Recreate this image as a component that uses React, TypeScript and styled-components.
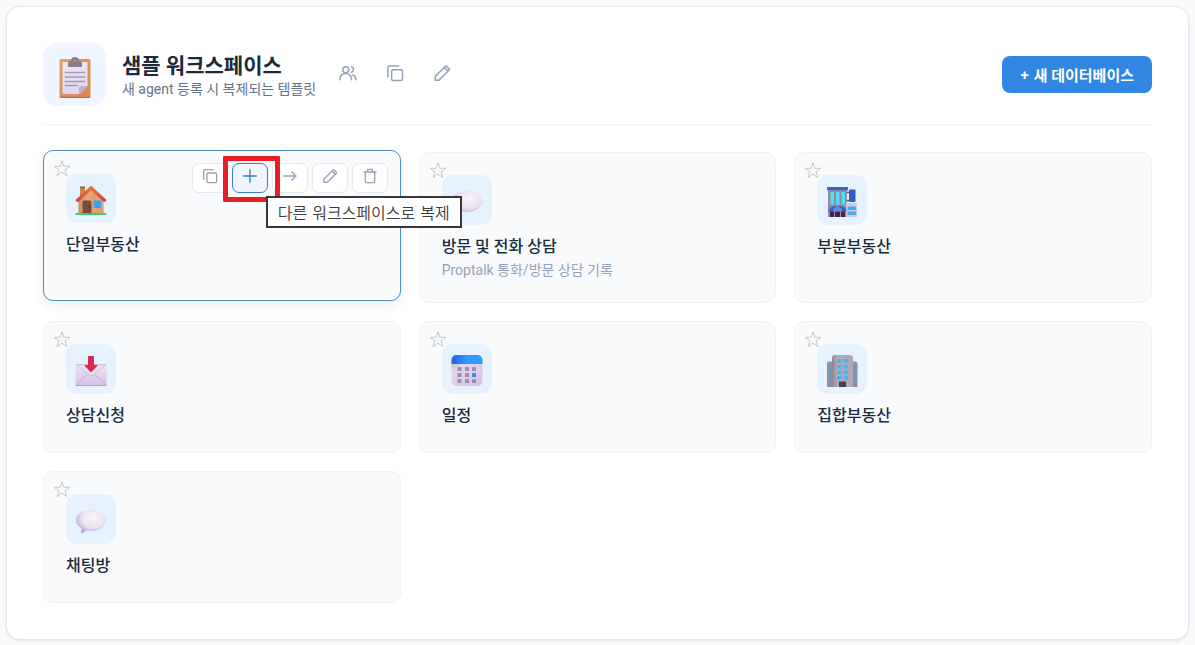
import React from 'react';
import styled, { createGlobalStyle, css } from 'styled-components';

const GlobalStyle = createGlobalStyle`
  *, *::before, *::after { box-sizing: border-box; }
  body {
    margin: 0;
    background: #f8fafc;
    color: #1a2b3d;
    font-family: Roboto, "Noto Sans CJK KR", sans-serif;
  }
  button { font-family: inherit; cursor: pointer; }
  h1, h2, p, ul { margin: 0; padding: 0; }
`;

const Page = styled.main`
  padding: 6px;
`;

const Panel = styled.section`
  padding: 36px;
  background: #fff;
  border: 1px solid #e2e8f0;
  border-radius: 14px;
  box-shadow: 0 1px 3px rgba(15, 23, 42, 0.1);
`;

const Header = styled.header`
  display: flex;
  align-items: center;
  padding-bottom: 18px;
  margin-bottom: 27px;
  border-bottom: 1px solid #f0f2f5;
`;

const WorkspaceIcon = styled.div`
  display: grid;
  place-items: center;
  flex: none;
  width: 63px;
  height: 63px;
  padding-top: 6px;
  margin-right: 16px;
  border-radius: 14px;
  background: #eff6ff;
`;

const TitleBlock = styled.div`
  padding-top: 2px;
`;

const WorkspaceTitle = styled.h1`
  font-size: 21px;
  line-height: 26px;
  font-weight: 700;
`;

const WorkspaceNote = styled.p`
  font-size: 14px;
  line-height: 20px;
  color: #64748b;
`;

const HeaderTools = styled.div`
  display: flex;
  gap: 9px;
  margin-left: 13px;
  padding-bottom: 4px;
`;

const GhostButton = styled.button`
  display: grid;
  place-items: center;
  width: 38px;
  height: 38px;
  padding: 0;
  border: 0;
  border-radius: 8px;
  background: transparent;
  color: #94a3b8;
`;

const PrimaryButton = styled.button`
  display: flex;
  align-items: center;
  gap: 5px;
  margin-left: auto;
  height: 37px;
  padding: 0 18px;
  border: 0;
  border-radius: 8px;
  background: #3086e0;
  color: #fff;
  font-size: 15px;
  font-weight: 700;
  white-space: nowrap;
`;

const Grid = styled.ul`
  display: grid;
  grid-template-columns: repeat(3, minmax(0, 1fr));
  gap: 18px;
  list-style: none;
`;

const Card = styled.li<{ $active?: boolean }>`
  position: relative;
  padding: 22px;
  border: 1px solid #f0f2f6;
  border-radius: 10px;
  background: #f8fafc;
  ${({ $active }) =>
    $active &&
    css`
      z-index: 1;
      border-color: #4a8fcb;
      box-shadow: 0 4px 12px rgba(0, 0, 0, 0.08);
      transform: translateY(-2px);
    `}
`;

const StarButton = styled.button`
  position: absolute;
  top: 8px;
  left: 9px;
  display: grid;
  padding: 0;
  border: 0;
  background: transparent;
  color: #c6c8ca;
`;

const Tile = styled.div`
  display: grid;
  place-items: center;
  width: 50px;
  height: 50px;
  padding-top: 4px;
  border-radius: 10px;
  background: #e6f3fe;
`;

const CardTitle = styled.h2`
  margin: 11px 0 3px;
  font-size: 16px;
  line-height: 22px;
  font-weight: 500;
`;

const CardNote = styled.p`
  font-size: 14px;
  line-height: 19px;
  color: #94a3b8;
`;

const CardTools = styled.div`
  position: absolute;
  top: 12px;
  right: 12px;
  display: flex;
  gap: 4px;
`;

const ToolButton = styled.button<{ $active?: boolean }>`
  position: relative;
  display: flex;
  justify-content: center;
  width: 36px;
  height: 30px;
  padding: 4px 0 0;
  border: 1px solid ${({ $active }) => ($active ? '#3b82c4' : '#e2e8f0')};
  border-radius: 7px;
  background: ${({ $active }) => ($active ? '#eff5fb' : '#fff')};
  color: ${({ $active }) => ($active ? '#3182ce' : '#94a3b8')};
  z-index: ${({ $active }) => ($active ? 1 : 0)};
`;

const Highlight = styled.span`
  position: absolute;
  top: -8px;
  left: -10px;
  width: 57px;
  height: 46px;
  border: 5px solid #e91d25;
  border-radius: 1px;
  pointer-events: none;
`;

const Tooltip = styled.span`
  position: absolute;
  top: 32px;
  left: 33px;
  padding: 3px 10px 0;
  border: 2px solid #3a383c;
  background: #fff;
  color: #3c3c3c;
  font-family: "DejaVu Sans", "Noto Sans CJK KR", sans-serif;
  font-size: 16px;
  line-height: 25px;
  font-weight: 350;
  white-space: nowrap;
`;

type IconName = 'users' | 'copy' | 'pencil' | 'plus' | 'arrow' | 'trash';

const iconShapes: Record<IconName, React.ReactNode> = {
  users: (
    <>
      <circle cx="9" cy="7.5" r="4" />
      <path d="M1.5 21v-1.5a7.5 7 0 0 1 15 0V21M16.5 3.6a4 4 0 0 1 0 7.6M18.5 14.6a6.6 6.6 0 0 1 4 6.4" />
    </>
  ),
  copy: (
    <>
      <rect x="7.5" y="7.5" width="14.5" height="14.5" rx="2" />
      <path d="M2.500 17V4.500a2 2 0 0 1 2-2H17" />
    </>
  ),
  pencil: <path d="M3 21.500v-5L16.500 3a1.200 1.200 0 0 1 1.700 0l3.300 3.300a1.200 1.200 0 0 1 0 1.700L8 21.500Z M15.500 5l4 4" />,
  plus: <path d="M12 2.500v19M2.500 12h19" />,
  arrow: <path d="M2.500 12h18M15 6l6 6-6 6" />,
  trash: <path d="M3 6h18M8.500 6V3a1 1 0 0 1 1-1h5a1 1 0 0 1 1 1v3M5 6v14a2 2 0 0 0 2 2h10a2 2 0 0 0 2-2V6" />,
};

function Icon({ name, size }: { name: IconName; size: number }) {
  return (
    <svg width={size} height={size} viewBox="0 0 24 24" fill="none" stroke="currentColor"
      strokeWidth="2" strokeLinecap="round" strokeLinejoin="round" aria-hidden="true">
      {iconShapes[name]}
    </svg>
  );
}

function Star() {
  return (
    <svg width="18" height="18" viewBox="0 0 18 18" fill="none" stroke="currentColor" aria-hidden="true">
      <path d="M9 1.700l1.900 5.600h6l-4.850 3.600 1.850 5.800L9 13.100l-4.900 3.600 1.850-5.800L1.100 7.300h6z" />
    </svg>
  );
}

function Clipboard() {
  return (
    <svg width="32" height="42" viewBox="0 0 32 42" aria-hidden="true">
      <defs>
        <linearGradient id="board" x1="0" y1="0" x2="1" y2="1">
          <stop offset="0" stopColor="#e6a160" /><stop offset="1" stopColor="#d98750" />
        </linearGradient>
        <linearGradient id="sheet" x1="0" y1="0" x2="0" y2="1">
          <stop offset="0" stopColor="#efe6f6" /><stop offset="1" stopColor="#ddd3ee" />
        </linearGradient>
      </defs>
      <rect x="0.500" y="2" width="31" height="39" rx="1.500" fill="url(#board)" />
      <path d="M1 39.500h30v.500a1 1 0 0 1-1 1H2a1 1 0 0 1-1-1z" fill="#c4704f" />
      <path d="M3.500 5h25v24l-8 8h-16a1 1 0 0 1-1-1z" fill="url(#sheet)" />
      <path d="M20 37v-6.500a1.500 1.500 0 0 1 1.500-1.500H28.500z" fill="#bfb0cf" />
      <path d="M6.500 15.500h19M6.500 20h19M6.500 24.500h19M6.500 28.500h12" stroke="#a799b4" strokeWidth="1.700" strokeLinecap="round" />
      <path d="M9 9V6.500C9 4.500 10 4 12 4a4 4 0 0 1 8 0c2 0 3 .500 3 2.500V9a1 1 0 0 1-1 1H10a1 1 0 0 1-1-1z" fill="#8c7f8d" />
      <circle cx="16" cy="3.800" r="1" fill="#d6a273" />
    </svg>
  );
}

function House() {
  return (
    <svg width="32" height="32" viewBox="0 0 32 32" aria-hidden="true">
      <defs>
        <linearGradient id="wall" x1="0" y1="0" x2="1" y2="0">
          <stop offset="0" stopColor="#c9905f" /><stop offset=".35" stopColor="#e0a876" /><stop offset="1" stopColor="#dc9d73" />
        </linearGradient>
        <linearGradient id="roof" x1="0" y1="0" x2="0" y2="1">
          <stop offset="0" stopColor="#f07b45" /><stop offset="1" stopColor="#d33c42" />
        </linearGradient>
      </defs>
      <rect x="5" y="3" width="5" height="11" fill="#c4894f" />
      <rect x="5" y="2.500" width="5" height="1.500" fill="#935b46" />
      <path d="M16 4 28.500 15.500V30h-25V15.500z" fill="url(#wall)" />
      <path d="M16 1.500 31 15.500a1 1 0 0 1 0 1.500l-1 .700a1 1 0 0 1-1.300 0L16 6.200 3.300 17.700a1 1 0 0 1-1.300 0L1 17a1 1 0 0 1 0-1.500z" fill="url(#roof)" />
      <path d="M7.500 30V18a1.500 1.500 0 0 1 1.500-1.500h6a1.500 1.500 0 0 1 1.500 1.500v12z" fill="#7d4940" />
      <circle cx="14.600" cy="23" r=".8" fill="#3c2627" />
      <rect x="18.500" y="16.500" width="7.500" height="7.500" rx=".8" fill="#36a7ee" />
      <rect x="0.500" y="29" width="31" height="2" rx="1" fill="#43cb67" />
    </svg>
  );
}

function Bubble({ id }: { id: string }) {
  return (
    <svg width="32" height="32" viewBox="0 0 32 32" aria-hidden="true">
      <defs>
        <radialGradient id={id} cx=".58" cy=".36" r=".66">
          <stop offset="0" stopColor="#f9f5fa" /><stop offset=".6" stopColor="#ebe2f1" /><stop offset="1" stopColor="#b7a1d3" />
        </radialGradient>
      </defs>
      <path d="M16.500 4.500C25 4.500 31 9 31 15s-6 11-14.500 11c-1.500 0-3-.1-4.400-.400L7 28.300c-.7.300-1.200-.1-1-.8l.5-4.200C3.300 21.500 1 18.700 1 15 1 9 8 4.500 16.500 4.500z" fill={`url(#${id})`} />
    </svg>
  );
}

function Store() {
  return (
    <svg width="32" height="32" viewBox="0 0 32 32" aria-hidden="true">
      <rect x="2" y="3" width="19" height="28" fill="#918c9f" />
      <rect x="1" y="1" width="21" height="3.200" rx=".8" fill="#405fc4" />
      <path d="M4.500 6H8v12.500H4.500zM10 6h3.500v12.500H10zM15.500 6H19v12.500h-3.500z" fill="#50dff2" />
      <path d="M21 6.500h2.500M21 14.500h2.500" stroke="#594e68" strokeWidth="1.500" />
      <rect x="23" y="3.500" width="6.500" height="12.500" rx=".8" fill="#355bcb" />
      <rect x="20" y="17" width="11" height="14" fill="#cdcbdc" />
      <path d="M21.500 20.500H30V24h-8.500zM21.500 25.500H30V29h-8.500z" fill="#46a8f2" />
      <path d="M4 25h15v6H4z" fill="#3f2948" />
      <path d="M8.500 25v6M14.500 25v6" stroke="#a18ab3" />
      <path d="M2.500 25.500c0-3.500 3-5.500 9-5.500s9 2 9 5.500z" fill="#3c60cd" />
      <path d="M7 25.500c0-2.500 2-5 4.500-5.400C14 20.500 16 23 16 25.500z" fill="#658ae4" />
    </svg>
  );
}

function Inbox() {
  return (
    <svg width="32" height="32" viewBox="0 0 32 32" aria-hidden="true">
      <defs>
        <linearGradient id="mail" x1="0" y1="0" x2="0" y2="1">
          <stop offset="0" stopColor="#eee6f2" /><stop offset="1" stopColor="#d6c0e7" />
        </linearGradient>
      </defs>
      <rect x="0.500" y="9" width="31" height="22" rx="1.500" fill="url(#mail)" />
      <path d="M1 30 12 19.500M31 30 20 19.500" stroke="#c5b0d3" />
      <path d="M1 9.500 14 20a3 3 0 0 0 4 0L31 9.500z" fill="#eadff0" stroke="#c9b9d2" strokeWidth=".8" />
      <path d="M1 30.500h30" stroke="#bd94df" strokeWidth="1" />
      <path d="M13.500 1h5a.5.500 0 0 1 .5.500V10h2.500c.8 0 1 .6.500 1.200l-5.300 5.600a1 1 0 0 1-1.400 0L10 11.200c-.5-.6-.3-1.200.500-1.200H13V1.500a.5.500 0 0 1 .5-.5z" fill="#dc2856" />
    </svg>
  );
}

function Calendar() {
  const columns = [9.5, 17, 24];
  const rows = [14, 20, 26];
  return (
    <svg width="32" height="32" viewBox="0 0 32 32" aria-hidden="true">
      <defs>
        <linearGradient id="calTop" x1="0" y1="0" x2="1" y2="0">
          <stop offset="0" stopColor="#2460d8" /><stop offset=".5" stopColor="#319bfa" /><stop offset="1" stopColor="#319bfa" />
        </linearGradient>
        <linearGradient id="calBody" x1="0" y1="0" x2="1" y2="1">
          <stop offset="0" stopColor="#cbbbd5" /><stop offset=".2" stopColor="#e2d7ed" /><stop offset="1" stopColor="#d6bee8" />
        </linearGradient>
      </defs>
      <path d="M.5 9h31v17a5 5 0 0 1-5 5h-21a5 5 0 0 1-5-5z" fill="url(#calBody)" />
      <path d="M.5 9V5a5 5 0 0 1 5-5h21a5 5 0 0 1 5 5v4z" fill="url(#calTop)" />
      {rows.map((y, r) =>
        columns.map((x, c) => (
          <rect key={`${r}-${c}`} x={x - 3} y={y - 2} width="4" height="4" rx=".6"
            fill={r === 1 && c === 2 ? '#2f8fe8' : '#9b8fab'} />
        )),
      )}
    </svg>
  );
}

function Tower() {
  const rows = [4, 10, 15.5, 21];
  return (
    <svg width="32" height="32" viewBox="0 0 32 32" aria-hidden="true">
      <defs>
        <linearGradient id="tower" x1="0" y1="0" x2="1" y2="0">
          <stop offset="0" stopColor="#8d8592" /><stop offset=".25" stopColor="#b3acba" /><stop offset="1" stopColor="#aea6b5" />
        </linearGradient>
      </defs>
      <path d="M1 8.500a2 2 0 0 1 2-2h26a2.500 2.500 0 0 1 2.500 2.500v23H1z" fill="#968d9c" />
      <path d="M6 3a3 3 0 0 1 3-3h15a3 3 0 0 1 3 3v29H6z" fill="url(#tower)" />
      {rows.map((y) => (
        <path key={y} d={`M11 ${y}h4.500v3.500H11zM17.500 ${y}H22v3.500h-4.500z`} fill="#3eb8f5" />
      ))}
      <path d="M3 11h2v3H3zM3 16h2v3H3zM3 21.500h2v3H3zM28.500 11h2v3h-2zM28.500 16h2v3h-2zM28.500 21.500h2v3h-2z" fill="#3aaae8" />
      <rect x="13" y="26.500" width="7" height="5.500" fill="#4b3c4a" />
    </svg>
  );
}

interface Database {
  name: string;
  note?: string;
  art: React.ReactNode;
  active?: boolean;
}

const databases: Database[] = [
  { name: '단일부동산', art: <House />, active: true },
  { name: '방문 및 전화 상담', note: 'Proptalk 통화/방문 상담 기록', art: <Bubble id="visitBubble" /> },
  { name: '부분부동산', art: <Store /> },
  { name: '상담신청', art: <Inbox /> },
  { name: '일정', art: <Calendar /> },
  { name: '집합부동산', art: <Tower /> },
  { name: '채팅방', art: <Bubble id="chatBubble" /> },
];

function CardActions() {
  return (
    <CardTools>
      <ToolButton type="button" aria-label="복제"><Icon name="copy" size={16} /></ToolButton>
      <ToolButton type="button" $active aria-describedby="copy-tip" aria-label="추가">
        <Icon name="plus" size={16} />
        <Highlight />
        <Tooltip id="copy-tip" role="tooltip">다른 워크스페이스로 복제</Tooltip>
      </ToolButton>
      <ToolButton type="button" aria-label="이동"><Icon name="arrow" size={16} /></ToolButton>
      <ToolButton type="button" aria-label="수정"><Icon name="pencil" size={16} /></ToolButton>
      <ToolButton type="button" aria-label="삭제"><Icon name="trash" size={16} /></ToolButton>
    </CardTools>
  );
}

export default function App() {
  return (
    <Page>
      <GlobalStyle />
      <Panel>
        <Header>
          <WorkspaceIcon><Clipboard /></WorkspaceIcon>
          <TitleBlock>
            <WorkspaceTitle>샘플 워크스페이스</WorkspaceTitle>
            <WorkspaceNote>새 agent 등록 시 복제되는 템플릿</WorkspaceNote>
          </TitleBlock>
          <HeaderTools>
            <GhostButton type="button" aria-label="멤버"><Icon name="users" size={18} /></GhostButton>
            <GhostButton type="button" aria-label="복제"><Icon name="copy" size={18} /></GhostButton>
            <GhostButton type="button" aria-label="수정"><Icon name="pencil" size={18} /></GhostButton>
          </HeaderTools>
          <PrimaryButton type="button"><span>+</span><span>새 데이터베이스</span></PrimaryButton>
        </Header>
        <Grid>
          {databases.map((db) => (
            <Card key={db.name} $active={db.active}>
              <StarButton type="button" aria-label="즐겨찾기"><Star /></StarButton>
              <Tile>{db.art}</Tile>
              <CardTitle>{db.name}</CardTitle>
              {db.note && <CardNote>{db.note}</CardNote>}
              {db.active && <CardActions />}
            </Card>
          ))}
        </Grid>
      </Panel>
    </Page>
  );
}
